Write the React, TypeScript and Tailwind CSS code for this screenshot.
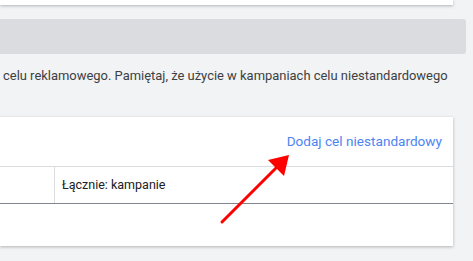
import React from 'react'

function Arrow() {
  return (
    <svg
      className="absolute left-0 top-0 pointer-events-none"
      width={473}
      height={261}
      viewBox="0 0 473 261"
    >
      <line x1={222} y1={222} x2={278} y2={166} stroke="#ff0000" strokeWidth={3} strokeLinecap="round" />
      <polygon points="289,155 284,176 268,160" fill="#ff0000" />
    </svg>
  )
}

export default function App() {
  return (
    <div
      className="relative w-[473px] h-[261px] overflow-hidden bg-[#f1f3f4] text-[#3c4043]"
      style={{ fontFamily: 'Roboto, "Noto Sans", sans-serif' }}
    >
      <div className="h-[5px] w-[453px] bg-white shadow-[0_1px_3px_rgba(60,64,67,0.35)]" />
      <div className="mt-[14px] h-[35px] w-[466px] rounded-r-[3px] bg-[#dadce0]" />
      <p className="mt-[12px] pl-[3px] text-[12.95px] leading-[20px] whitespace-nowrap">
        celu reklamowego. Pamiętaj, że użycie w kampaniach celu niestandardowego
      </p>

      <div className="mt-[31px] w-[453px] bg-white shadow-[0_1px_3px_rgba(60,64,67,0.35)]">
        <div className="flex h-[50px] items-center justify-end border-b border-[#dadce0] pr-[11px]">
          <span className="text-[13.6px] text-[#4d84f3]">Dodaj cel niestandardowy</span>
        </div>
        <div className="flex h-[37px] border-b border-[#80868b]">
          <div className="w-[55px] border-r border-[#dadce0]" />
          <div className="flex items-center pl-[7px] text-[12.5px] text-[#202124]">Łącznie: kampanie</div>
        </div>
        <div className="h-[42px]" />
      </div>

      <Arrow />
    </div>
  )
}
